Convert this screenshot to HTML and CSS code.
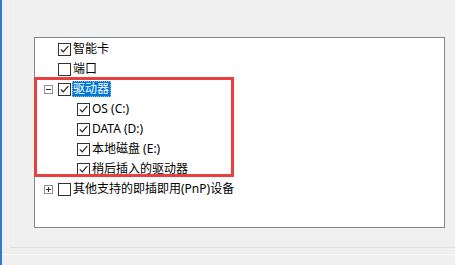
FILE: index.html
```html
<!DOCTYPE html>
<html>
<head>
<meta charset="utf-8">
<link rel="stylesheet" href="styles.css">
</head>
<body>
<div class="window">
  <div class="panel">
    <div class="tree">
      <div class="row l1"><span class="exp none"></span><span class="cb on"></span><span class="label">智能卡</span></div>
      <div class="row l1"><span class="exp none"></span><span class="cb"></span><span class="label">端口</span></div>
      <div class="row l1"><span class="exp minus"></span><span class="cb on"></span><span class="label sel">驱动器</span></div>
      <div class="row l2"><span class="exp none"></span><span class="cb on"></span><span class="label">OS (C:)</span></div>
      <div class="row l2"><span class="exp none"></span><span class="cb on"></span><span class="label">DATA (D:)</span></div>
      <div class="row l2"><span class="exp none"></span><span class="cb on"></span><span class="label">本地磁盘 (E:)</span></div>
      <div class="row l2"><span class="exp none"></span><span class="cb on"></span><span class="label">稍后插入的驱动器</span></div>
      <div class="row l1"><span class="exp plus"></span><span class="cb"></span><span class="label">其他支持的即插即用(PnP)设备</span></div>
    </div>
  </div>
  <div class="footer-line"></div>
  <div class="annot"></div>
</div>
</body>
</html>
```
FILE: styles.css
```css
html, body {
  margin: 0;
  padding: 0;
  background: #f0f0f0;
}
.window {
  position: relative;
  width: 453px;
  height: 265px;
  background: #f0f0f0;
  border-left: 2px solid #2f7cc8;
  font-family: "Segoe UI", "Noto Sans", "Noto Sans CJK SC", sans-serif;
  font-size: 12px;
  color: #000;
  overflow: hidden;
}
.panel {
  margin-left: 8px;
  height: 248px;
  box-sizing: border-box;
  border-left: 1px solid #f6ebe2;
  border-bottom: 1px solid #dedede;
  padding-top: 37px;
  padding-left: 23px;
}
.footer-line {
  margin-top: 6px;
  height: 1px;
  background: #fafafa;
}
.tree {
  width: 411px;
  height: 191px;
  box-sizing: border-box;
  background: #fff;
  border: 1px solid #828790;
  padding-top: 1px;
}
.row {
  display: flex;
  align-items: center;
  height: 20px;
  white-space: nowrap;
}
.row.l1 { padding-left: 9px; }
.row.l2 { padding-left: 28px; }
.exp {
  width: 9px;
  height: 9px;
  box-sizing: border-box;
  margin-right: 5px;
  position: relative;
  flex: none;
}
.exp.minus, .exp.plus {
  border: 1px solid #919191;
  background: #fff;
}
.exp.minus::before, .exp.plus::before {
  content: "";
  position: absolute;
  left: 1px;
  top: 3px;
  width: 5px;
  height: 1px;
  background: #333;
}
.exp.plus::after {
  content: "";
  position: absolute;
  left: 3px;
  top: 1px;
  width: 1px;
  height: 5px;
  background: #333;
}
.cb {
  width: 13px;
  height: 13px;
  box-sizing: border-box;
  border: 1px solid #333;
  background: #fff;
  flex: none;
  position: relative;
}
.cb.on::after {
  content: "";
  position: absolute;
  left: 3px;
  top: 0px;
  width: 4px;
  height: 8px;
  border-right: 1.3px solid #222;
  border-bottom: 1.3px solid #222;
  transform: rotate(40deg);
  transform-origin: center;
}
.cb.on::after {
  left: 1px;
  top: 1px;
  width: 9px;
  height: 9px;
  border: none;
  transform: none;
  background: no-repeat center / 9px 9px url("data:image/svg+xml;utf8,<svg xmlns='http://www.w3.org/2000/svg' viewBox='0 0 9 9'><path d='M0.8 4.4 L3.2 6.8 L8.3 1.2' fill='none' stroke='%23222' stroke-width='1.2'/></svg>");
}
.label {
  line-height: 16px;
  height: 16px;
  padding: 0 2px 0 1px;
  margin-left: 1px;
}
.label.sel {
  background: #0078d7;
  color: #fff;
  outline: 1px dotted #8fbfea;
  outline-offset: -1px;
}
.annot {
  position: absolute;
  left: 32px;
  top: 77px;
  width: 200px;
  height: 100px;
  box-sizing: border-box;
  border: 3px solid #e8403f;
  pointer-events: none;
}
```
